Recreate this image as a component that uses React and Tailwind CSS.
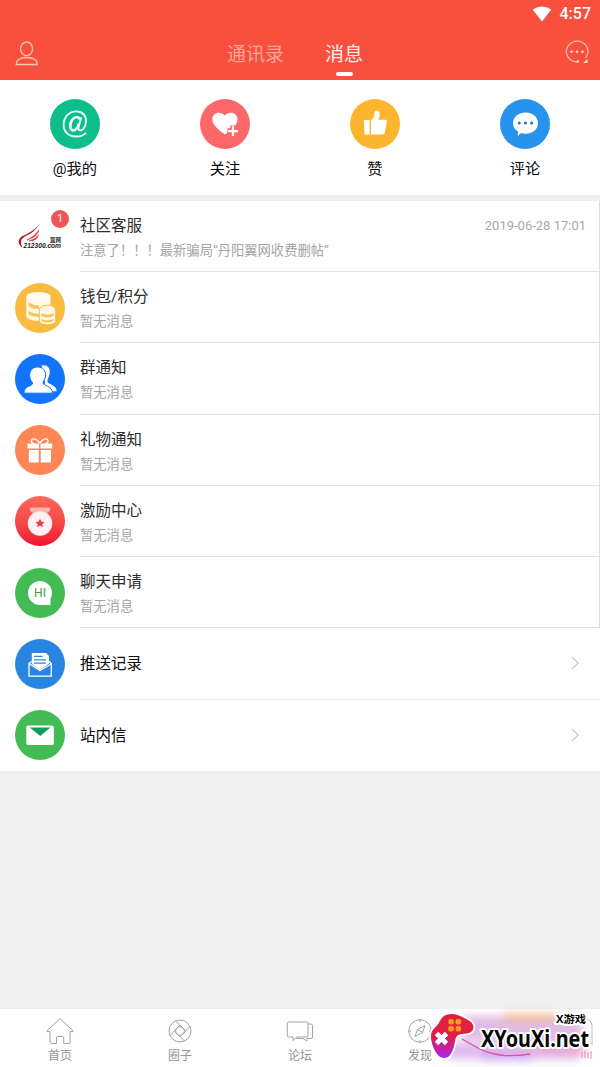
import { useState } from 'react'

const actions = [
  { key: 'at', label: '@我的', bg: 'bg-[#0dbd8c]', icon: AtIcon },
  { key: 'follow', label: '关注', bg: 'bg-[#fc6769]', icon: HeartIcon },
  { key: 'like', label: '赞', bg: 'bg-[#fcb62e]', icon: ThumbIcon },
  { key: 'comment', label: '评论', bg: 'bg-[#2893ec]', icon: CommentIcon },
]

const messages = [
  { title: '社区客服', text: '注意了！！！最新骗局“丹阳翼网收费删帖”', time: '2019-06-28 17:01', badge: 1, bg: 'bg-transparent', icon: SiteLogo },
  { title: '钱包/积分', text: '暂无消息', bg: 'bg-[#fabc40]', icon: CoinsIcon },
  { title: '群通知', text: '暂无消息', bg: 'bg-[#1373fa]', icon: GroupIcon },
  { title: '礼物通知', text: '暂无消息', bg: 'bg-[#fd8654]', icon: GiftIcon },
  { title: '激励中心', text: '暂无消息', bg: 'bg-gradient-to-b from-[#fb6a5c] to-[#f10a31]', icon: MedalIcon },
  { title: '聊天申请', text: '暂无消息', bg: 'bg-[#43bc56]', icon: HiIcon },
]

const links = [
  { title: '推送记录', bg: 'bg-[#2986e0]', icon: PushIcon },
  { title: '站内信', bg: 'bg-[#43bc56]', icon: MailIcon },
]

const tabs = [
  { label: '首页', icon: HomeIcon },
  { label: '圈子', icon: CircleIcon },
  { label: '论坛', icon: ForumIcon },
  { label: '发现', icon: CompassIcon },
]

function AtIcon() {
  return (
    <svg viewBox="0 0 50 50" className="w-full h-full" fill="none" stroke="#eafff8">
      <path d="M36 33.800C33.500 36.500 29.500 37.700 25.500 37.500C18 37.200 13.400 32 13.600 25.500C13.900 17.500 19.500 12.300 26.500 12.400C32.500 12.600 36.300 16.500 36 22.500C35.700 28 32.800 31.600 30 31.400C28 31.200 28.200 29.500 28.700 27.500L31.200 18.500" strokeWidth="1.900" />
      <path d="M30 20.500C29 17.500 24.500 17.300 22 21C19.700 24.500 19.500 30.800 22.700 31.300C25.500 31.600 28 28.500 29 24.500" strokeWidth="2.700" />
    </svg>
  )
}

function HeartIcon() {
  return (
    <svg viewBox="0 0 50 50" className="w-full h-full">
      <path d="M25 35.500C20 32 12.300 26.500 12.300 20.300C12.300 13.500 20.500 11.500 24.800 16.500C29 11.500 37.500 13.500 37.500 20.300C37.500 27 30 32 25 35.500Z" fill="#fff" />
      <path d="M33 26.500V37.500M27.500 32H38.500" stroke="#fc6769" strokeWidth="5.500" />
      <path d="M33 27.200V37M28.100 32.100H37.900" stroke="#fff" strokeWidth="2.300" />
    </svg>
  )
}

function ThumbIcon() {
  return (
    <svg viewBox="0 0 50 50" className="w-full h-full" fill="#fff">
      <path d="M13.800 21H19.600V35.500H14.600Z" />
      <path d="M21 21.500C24 19 24.200 16.500 24.500 13.500C25 10.500 29.800 10.800 29.700 15C29.700 17.500 29 19 28.500 20.700H35.500Q37.200 20.700 36.900 22.500L34.800 33.500Q34.400 35.500 32.500 35.500H21Z" />
    </svg>
  )
}

function CommentIcon() {
  return (
    <svg viewBox="0 0 50 50" className="w-full h-full">
      <path d="M25.500 13.500C32.500 13.500 38 18 38 24.300C38 30.500 32.500 34.800 25.500 34.800Q23 34.800 21 34L17.800 37L18 32.600C15 30.500 13 28 13 24.300C13 18 18.500 13.500 25.500 13.500Z" fill="#fff" />
      <g fill="#2870b8">
        <circle cx="19.300" cy="24" r="1.500" />
        <circle cx="25.500" cy="24" r="1.500" />
        <circle cx="31.700" cy="24" r="1.500" />
      </g>
    </svg>
  )
}

function SiteLogo() {
  return (
    <svg viewBox="0 0 50 50" className="w-full h-full overflow-visible">
      <path d="M24.500 12Q19 21 10 24.500Q3.500 28 7.500 36Q0 30 6.500 24.500Q18 20 24.500 12Z" fill="#a8232b" />
      <path d="M24 18Q20 24 12 28Q22 25.500 24 18ZM23.500 23Q20 27.500 14 29Q22 29 23.500 23Z" fill="#e03a3a" stroke="#c8282e" strokeWidth=".5" />
      <text x="8.500" y="36" fontSize="6.800" fontWeight="bold" fontStyle="italic" fill="#222" textLength="37.500" lengthAdjust="spacingAndGlyphs" fontFamily="Liberation Sans, sans-serif">212300.com</text>
      <text x="35" y="30" fontSize="5.500" fontWeight="bold" fill="#333" fontFamily="Noto Sans CJK SC, sans-serif">翼网</text>
    </svg>
  )
}

function CoinsIcon() {
  return (
    <svg viewBox="0 0 50 50" className="w-full h-full">
      <path d="M11.300 13.500V34C14 37.500 20 38 25 37.500V26H35.500V13.500Z" fill="#fff8e6" />
      <ellipse cx="23.400" cy="13.500" rx="12.100" ry="4.500" fill="#fffaf0" />
      <path d="M13.500 19.500Q18 22.300 24 22.500V26Q18 26 13.500 23.500ZM13.500 28Q18 30.800 24 31V34Q18 34 13.500 31.500Z" fill="#f5c560" />
      <path d="M24.300 27C24.300 20.500 40.700 20.500 40.700 27V38.500C38 42.800 27 42.800 24.300 38.500Z" fill="#fff8e6" stroke="#fabc40" strokeWidth="1" />
      <path d="M26.500 30Q32.500 33 38.500 30V33Q32.500 36 26.500 33ZM26.500 35.800Q32.500 38.800 38.500 35.800V38Q32.500 41 26.500 38Z" fill="#f5c560" />
    </svg>
  )
}

function GroupIcon() {
  return (
    <svg viewBox="0 0 50 50" className="w-full h-full">
      <path d="M26.500 11.500C32.500 10.500 35.200 14 34.700 19C34.300 23 32 25.500 32.500 28C34.500 31 41.700 31 41.700 37.300H30V28Z" fill="#fff" />
      <path d="M22.500 13C28 13 31 16.500 30.500 22C30.300 25 28.500 27 28 28.500C28 32.500 37.500 31 37.500 39.200H9C9 31 17.500 33 17.700 29C16 27 14.900 25 14.700 22C14.500 16.500 17.500 13 22.500 13Z" fill="#fff" stroke="#1373fa" strokeWidth="1" />
    </svg>
  )
}

function GiftIcon() {
  return (
    <svg viewBox="0 0 50 50" className="w-full h-full">
      <path d="M24.800 18C20 12.500 17 13.500 16.500 15.500Q16 18 19 18.500M24.800 18C29.500 12.500 32.500 13.500 33 15.500Q33.500 18 30.500 18.500" fill="none" stroke="#fff" strokeWidth="1.300" />
      <path d="M12.500 18.500H24V23.500H12.500ZM25.500 18.500H37.200V23.500H25.500ZM13.800 25H23.800V37.500H13.800ZM25.700 25H36V37.500H25.700Z" fill="#fff" />
    </svg>
  )
}

function MedalIcon() {
  return (
    <svg viewBox="0 0 50 50" className="w-full h-full">
      <path d="M15 11.500H35V14.500L31 18H19L15 14.500Z" fill="#ffb2aa" />
      <circle cx="25" cy="27.500" r="12.200" fill="#fff1f1" />
      <path d="M25 22.800L26.400 25.500L29.500 26L27.300 28.200L27.800 31.200L25 29.800L22.200 31.200L22.700 28.200L20.500 26L23.600 25.500Z" fill="#ee3f50" />
    </svg>
  )
}

function HiIcon() {
  return (
    <svg viewBox="0 0 50 50" className="w-full h-full">
      <path d="M25 13A12 12 0 0 0 25 37H35.500V30.500Q37 28 37 25A12 12 0 0 0 25 13Z" fill="#fff" />
      <text x="25" y="29" textAnchor="middle" fontSize="12" fill="#37a24a" fontFamily="Roboto, sans-serif">HI</text>
    </svg>
  )
}

function PushIcon() {
  return (
    <svg viewBox="0 0 50 50" className="w-full h-full">
      <path d="M16.800 14H31L34 17V24.500L25 31L16.800 25Z" fill="#fff" />
      <path d="M19 17.300H27.500M19 20.800H31M19 24.200H31" stroke="#2986e0" strokeWidth="1.300" />
      <path d="M16.500 22.500L14 24.500V37.200H36.300V24.500L34 22.500M14.500 25L25 31.500L36 25" fill="none" stroke="#fff" strokeWidth="1.300" />
    </svg>
  )
}

function MailIcon() {
  return (
    <svg viewBox="0 0 50 50" className="w-full h-full">
      <rect x="11.300" y="15.500" width="27.500" height="19.500" rx="1.800" fill="#fff" />
      <path d="M14.800 17.500H35.500L25.200 26Z" fill="#119a5a" />
    </svg>
  )
}

function HomeIcon() {
  return (
    <path d="M1.700 13L15 .8L28.300 13Q28 14 25 13.500V24.500Q25 25.500 24 25.500H18.700V20Q18.700 18.500 17.500 18.500H12.500Q11.500 18.500 11.500 20V25.500H6.500Q5 25.500 5 24V13.500Q2 14 1.700 13Z" />
  )
}

function CircleIcon() {
  return (
    <>
      <circle cx="15" cy="13" r="11" />
      <circle cx="15" cy="13" r="4.300" />
      <path d="M10.500 3L20.500 12.500M25 8.500L15.500 18.500M19.500 23L9.500 13.500M5 17.500L14.500 7.500" />
    </>
  )
}

function ForumIcon() {
  return (
    <path d="M3.500 4H21.500Q23 4 23 5.500V17.500Q23 19 21.500 19H12L8 22.500V19H3.500Q2.300 19 2.300 17.500V5.500Q2.300 4 3.500 4ZM23 6H26Q27.500 6 27.500 7.500V19Q27.500 20.500 26 20.500H22V23L18 20.500H11.500" />
  )
}

function CompassIcon() {
  return (
    <>
      <circle cx="15" cy="13" r="11.300" />
      <path d="M20 7.500L17.500 14.500L10 18.500L12.500 11.500ZM12.500 11.500L17.500 14.500M15 1.700V4M15 22V24.300M3.700 13H6M24 13H26.300" />
    </>
  )
}

function Watermark() {
  return (
    <div className="absolute right-0 bottom-0 w-[180px] h-[62px] overflow-hidden">
      <svg viewBox="0 0 180 62" className="w-full h-full">
        <defs>
          <filter id="soft" x="-30%" y="-60%" width="160%" height="220%">
            <feGaussianBlur stdDeviation="4" />
          </filter>
          <linearGradient id="pad" x1="0.300" y1="0" x2="0.300" y2="1">
            <stop offset="0" stopColor="#e5203f" />
            <stop offset=".5" stopColor="#dd2047" />
            <stop offset="1" stopColor="#ae24ed" />
          </linearGradient>
        </defs>
        <g filter="url(#soft)">
          <rect x="42" y="11" width="120" height="24" fill="#d5a5db" opacity=".75" />
          <rect x="84" y="8" width="52" height="9" fill="#f2bc81" opacity=".75" />
          <rect x="28" y="38" width="132" height="16" fill="#d39be8" opacity=".7" />
          <rect x="110" y="36" width="56" height="14" fill="#eba5c8" opacity=".7" />
          <rect x="62" y="48" width="50" height="7" fill="#c9a2f3" />
        </g>
        <path d="M164 14Q172 14 172 21V40" fill="none" stroke="#c4bcc4" />
        <path d="M162 47V53M165 46V53M168 47V53M171 46V54" stroke="#dd8eae" />
        <path d="M42 34C58 43 66 49 84 50.500Q98 51 110 49" fill="none" stroke="#df5494" strokeWidth="1.400" />
        <path d="M20 16C23 10 27 9 32 9C38 9 44 13 49 15.500C55 19 55 26 49 28C43 29.500 37 28 35.500 34C34 42 32 53 24 53C16 53 10.500 38 11 30C11.500 24 17 22 20 16Z" fill="url(#pad)" stroke="#fff" strokeWidth="3.500" paintOrder="stroke" />
        <path d="M16.500 28.500L26.500 38.500M26.500 28.500L16.500 38.500" stroke="#fff" strokeWidth="4.800" />
        <g fill="#ff9d18">
          <rect x="28.300" y="14" width="5.600" height="5.600" rx="2" />
          <rect x="35.500" y="14" width="5.600" height="5.600" rx="2" />
          <rect x="28.300" y="21" width="5.600" height="5.600" rx="2" />
          <rect x="35.500" y="21" width="5.600" height="5.600" rx="2" />
        </g>
        <g fill="#050505" stroke="#fff" strokeWidth="4" strokeLinejoin="round" paintOrder="stroke" fontWeight="700">
          <text x="136" y="17.800" fontSize="10.500" textLength="30" lengthAdjust="spacingAndGlyphs" fontFamily="Open Sans, Noto Sans CJK SC, sans-serif">X游戏</text>
          <text x="61" y="41.500" fontSize="22.500" textLength="108" lengthAdjust="spacingAndGlyphs" fontFamily="Noto Sans, sans-serif">XYouXi.net</text>
        </g>
      </svg>
    </div>
  )
}

function Chevron() {
  return (
    <svg viewBox="0 0 10 14" className="w-2.5 h-3.5" fill="none" stroke="#c8c8c8" strokeWidth="1.200">
      <path d="M2 1L8 7L2 13" />
    </svg>
  )
}

export default function App() {
  const [active, setActive] = useState('消息')

  return (
    <div className="relative flex flex-col w-[600px] h-[1067px] overflow-hidden bg-[#f0f0f0] font-['Roboto','Noto_Sans_CJK_SC',sans-serif]">
      {/* ステータスバー＋ヘッダー */}
      <header className="h-20 shrink-0 bg-[#f94f3d] text-white">
        <div className="h-7 flex items-center justify-end gap-2 pr-[9px]">
          <svg viewBox="0 0 20 16" className="w-5 h-4" fill="#fff">
            <path d="M.7 3.500Q10-2.500 19.300 3.500L10 15.500Z" />
          </svg>
          <span className="text-[16px] leading-7 font-medium">4:57</span>
        </div>
        <div className="h-[52px] flex items-start pl-[15px] pr-[11px]">
          <svg viewBox="0 0 24 26" className="w-6 h-[26px] mt-3" fill="none" stroke="#ffc4aa" strokeWidth="1.300">
            <ellipse cx="11.600" cy="8.800" rx="6" ry="6.800" />
            <path d="M1.200 24.500C1.200 19 6 17.500 11.600 17.500S22.300 19 22.300 24.500Z" />
          </svg>
          <nav className="flex gap-[41px] ml-[188px] mr-auto text-[19px] leading-[53px]">
            {['通讯录', '消息'].map(t => (
              <button key={t} onClick={() => setActive(t)} className="flex flex-col items-center h-[52px] cursor-pointer">
                <span className={active === t ? 'h-11 text-[#fff1ed]' : 'h-11 text-[#ffa799]'}>{t}</span>
                {active === t && <span className="w-[17px] h-1 rounded-sm bg-white" />}
              </button>
            ))}
          </nav>
          <svg viewBox="0 0 24 26" className="w-6 h-[26px] mt-3" fill="none" stroke="#ffc4aa" strokeWidth="1.200">
            <path d="M12.500 21.800A10.800 10.300 0 1 1 20.300 18.300" />
            <g fill="#ffe5da" stroke="none">
              <circle cx="6.500" cy="11.700" r="1.300" />
              <circle cx="12" cy="11.700" r="1.300" />
              <circle cx="17.500" cy="11.700" r="1.300" />
              <circle cx="13" cy="21.500" r="1.200" />
              <path d="M22.500 19V23H18Z" />
            </g>
          </svg>
        </div>
      </header>

      {/* ショートカット */}
      <section className="h-[115px] shrink-0 grid grid-cols-4 bg-[#fefefe] pt-[19px]">
        {actions.map(a => (
          <div key={a.key} className="flex flex-col items-center">
            <div className={`size-[50px] rounded-full ${a.bg}`}><a.icon /></div>
            <span className="mt-2 text-[15.3px] leading-6 text-[#0c0c0c]">{a.label}</span>
          </div>
        ))}
      </section>

      {/* メッセージ一覧 */}
      <section className="mt-1.5 shrink-0 bg-[#fefefe] border-r border-[#dedede]">
        {messages.map(m => (
          <div key={m.title} className="flex h-[71.2px] pl-[15px] gap-[15px]">
            <div className="relative self-center size-[50px] shrink-0">
              <div className={`size-full rounded-full ${m.bg}`}><m.icon /></div>
              {m.badge && (
                <span className="absolute -top-[2px] -right-1 size-[18px] rounded-full bg-[#ef5554] text-white text-[11px] leading-[18px] text-center">
                  {m.badge}
                </span>
              )}
            </div>
            <div className="flex-1 pt-[13px] pr-[13px] border-b border-[#e2e2e2]">
              <div className="flex items-center justify-between h-[25px]">
                <h2 className="text-[15.5px] leading-[25px] text-[#2d2d2d]">{m.title}</h2>
                {m.time && <span className="text-[13px] leading-5 pb-[2px] text-[#a9a9a9]">{m.time}</span>}
              </div>
              <p className="text-[13.3px] leading-[24px] text-[#a5a5a5]">{m.text}</p>
            </div>
          </div>
        ))}
      </section>

      <section className="shrink-0 bg-[#fefefe]">
        {links.map((l, i) => (
          <div key={l.title} className="flex h-[71.5px] pl-[15px] gap-[15px]">
            <div className={`self-center size-[50px] shrink-0 rounded-full ${l.bg}`}><l.icon /></div>
            <div className={`flex-1 flex items-center justify-between pr-5 ${i < links.length - 1 ? 'border-b border-[#ececec]' : ''}`}>
              <h2 className="pt-[2px] text-[15.5px] leading-6 text-[#0c0c0c]">{l.title}</h2>
              <Chevron />
            </div>
          </div>
        ))}
      </section>

      <footer className="mt-auto h-[58px] shrink-0 grid grid-cols-5 bg-[#fefefe]">
        {tabs.map(t => (
          <div key={t.label} className="flex flex-col items-center pt-[9px]">
            <svg viewBox="0 0 30 26" className="w-[30px] h-[26px]" fill="none" stroke="#999" strokeWidth=".9">
              <t.icon />
            </svg>
            <span className="mt-[3px] text-[12px] leading-[18px] text-[#959595]">{t.label}</span>
          </div>
        ))}
      </footer>

      <Watermark />
    </div>
  )
}
